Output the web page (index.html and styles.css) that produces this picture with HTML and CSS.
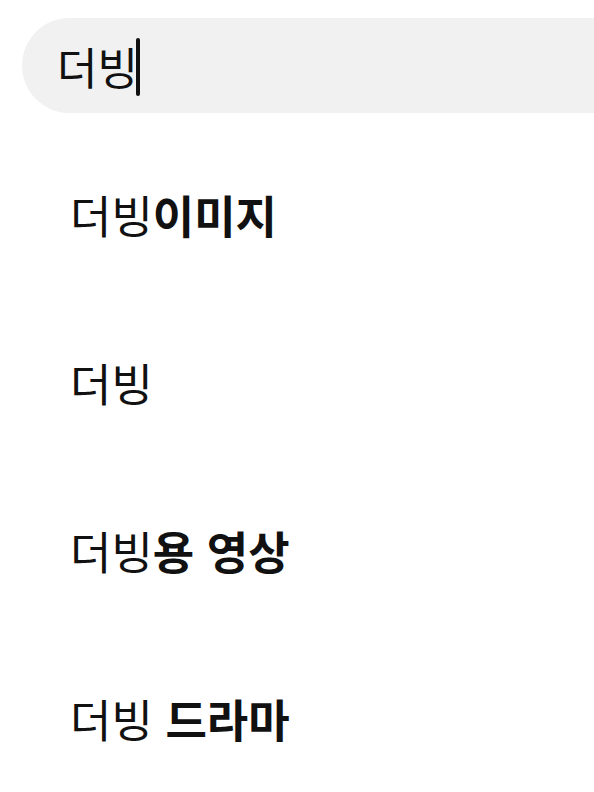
FILE: index.html
```html
<!DOCTYPE html>
<html lang="ko">
<head>
<meta charset="utf-8">
<link rel="stylesheet" href="styles.css">
</head>
<body>
<div class="search">
  <span class="query">더빙</span><span class="caret"></span>
</div>
<ul class="list">
  <li class="item">더빙<b>이미지</b></li>
  <li class="item">더빙</li>
  <li class="item">더빙<b>용 영상</b></li>
  <li class="item">더빙 <b>드라마</b></li>
</ul>
</body>
</html>
```
FILE: styles.css
```css
html, body {
  margin: 0;
  padding: 0;
  background: #ffffff;
  font-family: "Noto Sans CJK KR", "Noto Sans", sans-serif;
  color: #111111;
  overflow: hidden;
}
.search {
  margin: 18px 0 0 22px;
  height: 95px;
  background: #f1f1f1;
  border-radius: 48px 0 0 48px;
  display: flex;
  align-items: center;
  padding-left: 35px;
}
.query {
  font-size: 44px;
  line-height: 1;
  color: #111;
}
.caret {
  width: 4px;
  height: 58px;
  background: #111;
  border-radius: 2px;
  margin-left: -2px;
  margin-top: 2px;
}
.list {
  list-style: none;
  margin: 0;
  padding: 0 0 0 70px;
}
.item {
  font-size: 45px;
  height: 168px;
  line-height: 168px;
  font-weight: 400;
}
.item b {
  font-weight: 700;
}
.list .item:first-child {
  margin-top: 18px;
}
```
